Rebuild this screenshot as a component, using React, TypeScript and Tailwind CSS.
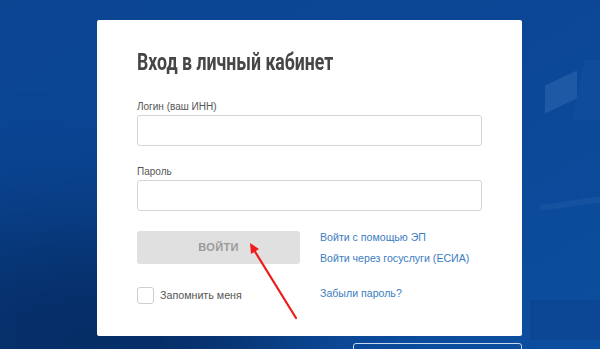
import React from 'react';

const Background: React.FC = () => (
  <div className="absolute inset-0 pointer-events-none">
    <div className="absolute -left-24 top-[230px] w-[380px] h-[220px] rounded-full bg-[#03214f] opacity-70 blur-3xl" />
    <div className="absolute left-[545px] top-[78px] w-[32px] h-[28px] bg-[#3d74b9] opacity-40 -skew-y-[25deg]" />
    <div className="absolute left-[578px] top-[60px] w-[30px] h-[60px] bg-[#1a57a4] opacity-30 -skew-x-[12deg]" />
    <div className="absolute left-[540px] top-[200px] w-[70px] h-[6px] bg-[#2a63ab] opacity-30 -rotate-[8deg]" />
    <div className="absolute left-[530px] top-[300px] w-[70px] h-[40px] bg-[#0a3f86] opacity-40" />
  </div>
);

const Arrow: React.FC = () => (
  <svg className="absolute left-0 top-0 pointer-events-none" width="600" height="349">
    <line x1="296" y1="318" x2="254" y2="250" stroke="#ee1c1c" strokeWidth="2.2" strokeLinecap="round" />
    <polygon points="250,243 259,249 251,254" fill="#ee1c1c" />
  </svg>
);

const App: React.FC = () => {
  return (
    <div className="relative w-[600px] h-[349px] overflow-hidden bg-gradient-to-br from-[#0b4592] via-[#0b4796] to-[#0c4e9f] font-['Liberation_Sans',Arial,sans-serif]">
      <Background />
      <div className="relative flex flex-col pl-[97px] pt-[20px]">
        {/* Card */}
        <div className="w-[425px] h-[316px] bg-white rounded-[2px] px-[40px] pt-[29px]">
          <h1 className="h-[28px] whitespace-nowrap">
            <span className="inline-block origin-left scale-x-[0.77] text-[23px] leading-[28px] font-bold text-[#464646] font-['Roboto',sans-serif]">
              Вход в личный кабинет
            </span>
          </h1>

          <div className="mt-[24px] text-[10px] leading-[12px] text-[#555]">Логин (ваш ИНН)</div>
          <input className="mt-[2px] block w-[345px] h-[31px] border border-[#d6d6d6] rounded-[3px] outline-none" />

          <div className="mt-[20px] text-[10px] leading-[12px] text-[#555]">Пароль</div>
          <input type="password" className="mt-[2px] block w-[345px] h-[31px] border border-[#d6d6d6] rounded-[3px] outline-none" />

          <div className="mt-[20px] flex">
            <div className="w-[163px]">
              <button className="w-[163px] h-[33px] bg-[#e0e0e0] rounded-[3px] text-[11px] font-bold text-[#9a9a9a] tracking-[0.3px]">
                ВОЙТИ
              </button>
              <label className="mt-[23px] flex items-center gap-[6px]">
                <span className="w-[17px] h-[17px] border border-[#cfcfcf] rounded-[3px] bg-white" />
                <span className="text-[10.7px] text-[#555]">Запомнить меня</span>
              </label>
            </div>
            <div className="ml-[20px] flex flex-col text-[10.6px] text-[#3b7dc0] leading-[13px]">
              <a>Войти с помощью ЭП</a>
              <a className="mt-[8px]">Войти через госуслуги (ЕСИА)</a>
              <a className="mt-[22px]">Забыли пароль?</a>
            </div>
          </div>
        </div>
        {/* bottom box */}
        <div className="ml-[256px] mt-[7px] w-[169px] h-[20px] border border-[#c9d8ee] rounded-[3px]" />
      </div>
      <Arrow />
    </div>
  );
};

export default App;
